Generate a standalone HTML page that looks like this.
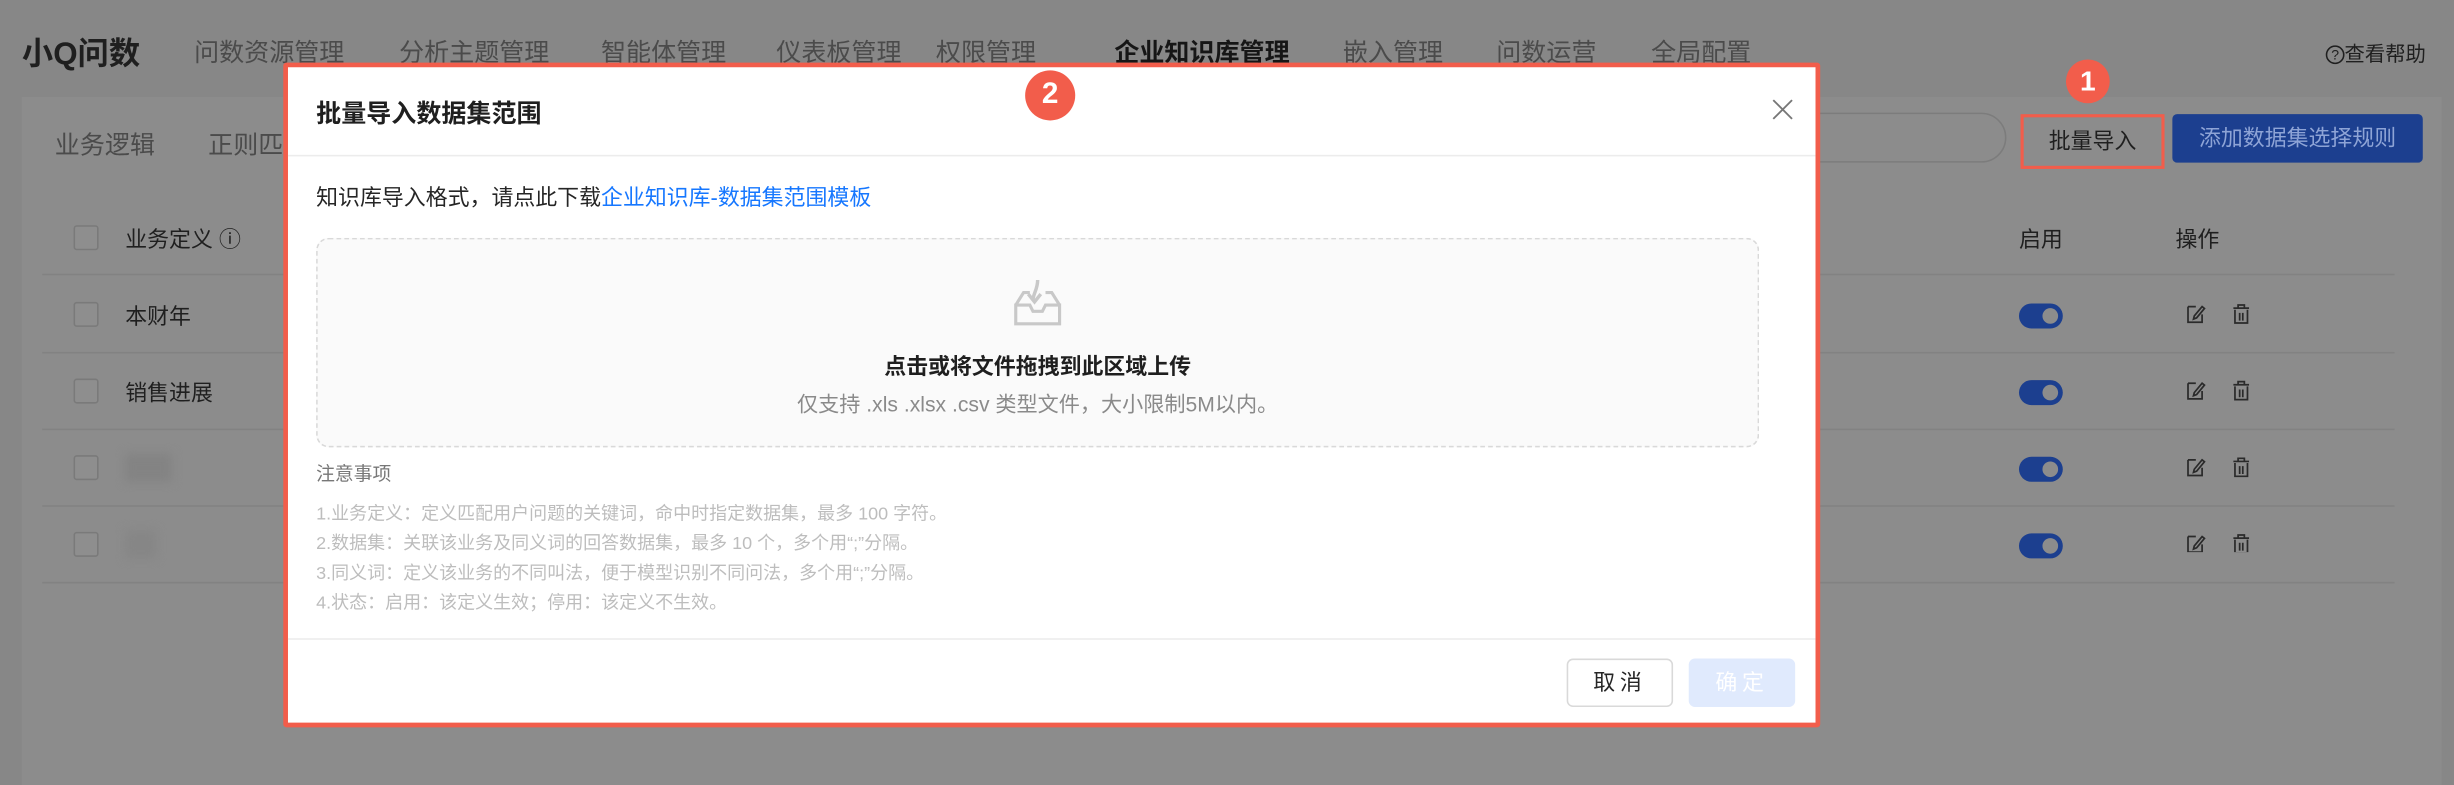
<!DOCTYPE html>
<html><head><meta charset="utf-8"><style>
html,body{margin:0;padding:0;width:2454px;height:768px;overflow:hidden;background:#878787;}
#s{position:absolute;left:0;top:0;width:1568px;height:491px;transform:scale(1.5651,1.5642);transform-origin:0 0;font-family:"Liberation Sans","Noto Sans CJK SC",sans-serif;}
.a{position:absolute;white-space:nowrap;}
.nav{top:20px;font-size:16px;color:#4b4b4b;}
.card{position:absolute;left:14px;top:62px;width:1546px;height:440px;background:#8c8c8c;}
.line{position:absolute;left:27px;width:1503px;height:1px;background:#828282;}
.cb{position:absolute;left:47px;width:14px;height:14px;border:1px solid #7a7a7a;border-radius:2px;background:#8e8e8e;}
.tg{position:absolute;left:1290px;width:28px;height:16px;border-radius:8px;background:#1c3f8f;}
.tg:after{content:"";position:absolute;right:3px;top:3px;width:10px;height:10px;border-radius:50%;background:#8c8c8c;}
.badge{position:absolute;border-radius:50%;background:#f25d4b;color:#fff;font-weight:bold;text-align:center;}
.note{left:202px;font-size:11.5px;color:#bdbdbd;}
</style></head><body><div id="s">
<div class="a" style="left:14px;top:18px;font-size:20px;font-weight:bold;color:#1f1f1f">小Q问数</div>
<div class="a nav" style="left:124px">问数资源管理</div>
<div class="a nav" style="left:255px">分析主题管理</div>
<div class="a nav" style="left:384px">智能体管理</div>
<div class="a nav" style="left:496px">仪表板管理</div>
<div class="a nav" style="left:598px">权限管理</div>
<div class="a nav" style="left:712px;color:#161616;font-weight:bold">企业知识库管理</div>
<div class="a nav" style="left:858px">嵌入管理</div>
<div class="a nav" style="left:956px">问数运营</div>
<div class="a nav" style="left:1055px">全局配置</div>
<div class="a" style="left:1486px;top:24px;font-size:13px;color:#1f1f1f"><span style="display:inline-block;width:10px;height:10px;border:1px solid #1f1f1f;border-radius:50%;font-size:9px;line-height:10px;text-align:center;vertical-align:1px">?</span>查看帮助</div>
<div class="card"></div>
<div class="a" style="left:35px;top:79px;font-size:16px;color:#4b4b4b">业务逻辑</div>
<div class="a" style="left:133px;top:79px;font-size:16px;color:#4b4b4b">正则匹配</div>
<div class="a" style="left:1100px;top:72px;width:180px;height:30px;border:1px solid #7c7c7c;border-radius:16px"></div>
<div class="a" style="left:1291px;top:73px;width:88px;height:31px;border:2px solid #f25d4b;font-size:14px;color:#1f1f1f;text-align:center;line-height:31px">批量导入</div>
<div class="a" style="left:1388px;top:73px;width:160px;height:31px;background:#1c3f8f;border-radius:3px;font-size:14px;color:#8ea4d6;text-align:center;line-height:31px">添加数据集选择规则</div>
<div class="badge" style="left:1320px;top:38px;width:28px;height:28px;line-height:28px;font-size:18px">1</div>
<div class="cb" style="top:144px"></div>
<div class="a" style="left:80px;top:143px;font-size:14px;color:#1f1f1f">业务定义 ⓘ</div>
<div class="a" style="left:1290px;top:143px;font-size:14px;color:#1f1f1f">启用</div>
<div class="a" style="left:1390px;top:143px;font-size:14px;color:#1f1f1f">操作</div>
<div class="line" style="top:175px"></div>
<div class="cb" style="top:193px"></div><div class="a" style="left:80px;top:192px;font-size:14px;color:#1f1f1f">本财年</div>
<div class="line" style="top:225px"></div>
<div class="cb" style="top:242px"></div><div class="a" style="left:80px;top:241px;font-size:14px;color:#1f1f1f">销售进展</div>
<div class="line" style="top:274px"></div>
<div class="cb" style="top:291px"></div><div class="a" style="left:80px;top:290px;width:30px;height:18px;background:#838383;filter:blur(3px)"></div>
<div class="line" style="top:323px"></div>
<div class="cb" style="top:340px"></div><div class="a" style="left:80px;top:339px;width:20px;height:18px;background:#868686;filter:blur(3px)"></div>
<div class="line" style="top:372px"></div>
<div class="tg" style="top:194px"></div><div class="tg" style="top:243px"></div><div class="tg" style="top:292px"></div><div class="tg" style="top:341px"></div>
<svg class="a" style="left:1396px;top:193px" width="50" height="160" fill="none" stroke="#2a2a2a" stroke-width="1.1">
<g id="ic"><path d="M2 3h5M2 3v10h9V8M6 9l5-6 1.5 1.2-5 6L5.5 11z"/><path d="M31 4h10M34 4V2h4v2M32 5v8.5h8V5M35 7v5M37 7v5"/></g>
<use href="#ic" y="49"/><use href="#ic" y="98"/><use href="#ic" y="147"/></svg>

<div class="a" style="left:181px;top:40px;width:976px;height:419px;background:#fff;border:3px solid #f25d4b;border-radius:2px"></div>
<div class="a" style="left:202px;top:59px;font-size:16px;font-weight:bold;color:#1f1f1f">批量导入数据集范围</div>
<svg class="a" style="left:1132px;top:63px" width="14" height="14" stroke="#777" stroke-width="1.2"><path d="M1 1l12 12M13 1L1 13"/></svg>
<div class="badge" style="left:655px;top:45px;width:32px;height:32px;line-height:32px;font-size:19px">2</div>
<div class="a" style="left:184px;top:99px;width:976px;height:1px;background:#ececec"></div>
<div class="a" style="left:202px;top:116px;font-size:14px;color:#262626">知识库导入格式，请点此下载<span style="color:#1677ff">企业知识库-数据集范围模板</span></div>
<div class="a" style="left:202px;top:152px;width:920px;height:132px;background:#fafafa;border:1px dashed #d9d9d9;border-radius:8px"></div>
<svg class="a" style="left:646px;top:177px" width="34" height="34" fill="none" stroke="#c8c8c8" stroke-width="2"><path d="M3 18l5-8h4M31 18l-5-8h-4M3 18v12h28V18h-9l-2 4h-6l-2-4z"/><path d="M17 2c0 6-3 9-3 13M11 11l4 5 4-5" stroke-width="2.2"/></svg>
<div class="a" style="left:202px;top:224px;width:922px;text-align:center;font-size:14px;font-weight:bold;color:#1f1f1f">点击或将文件拖拽到此区域上传</div>
<div class="a" style="left:202px;top:247px;width:922px;text-align:center;font-size:13.5px;color:#8a8a8a">仅支持 .xls .xlsx .csv 类型文件，大小限制5M以内。</div>
<div class="a" style="left:202px;top:294px;font-size:12px;color:#777">注意事项</div>
<div class="a note" style="top:320px">1.业务定义：定义匹配用户问题的关键词，命中时指定数据集，最多 100 字符。</div>
<div class="a note" style="top:339px">2.数据集：关联该业务及同义词的回答数据集，最多 10 个，多个用“;”分隔。</div>
<div class="a note" style="top:358px">3.同义词：定义该业务的不同叫法，便于模型识别不同问法，多个用“;”分隔。</div>
<div class="a note" style="top:377px">4.状态：启用：该定义生效；停用：该定义不生效。</div>
<div class="a" style="left:184px;top:408px;width:976px;height:1px;background:#ececec"></div>
<div class="a" style="left:1001px;top:421px;width:66px;height:29px;border:1px solid #d9d9d9;border-radius:4px;font-size:14px;color:#262626;text-align:center;line-height:29px;letter-spacing:3px">取消</div>
<div class="a" style="left:1079px;top:421px;width:68px;height:31px;background:#e0eafd;border-radius:4px;font-size:14px;color:#fff;text-align:center;line-height:31px;letter-spacing:3px">确定</div>
</div></body></html>
